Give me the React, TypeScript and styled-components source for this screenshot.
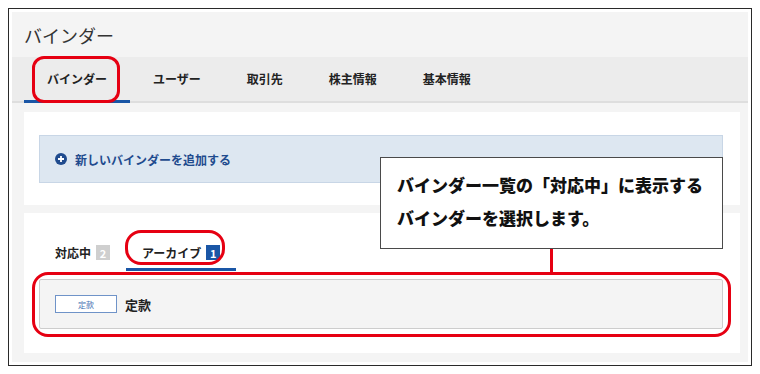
import { FC } from 'react';
import styled, { createGlobalStyle } from 'styled-components';

const GlobalStyle = createGlobalStyle`
	html, body {
		margin: 0;
		padding: 0;
		background: #fff;
	}
	body {
		font-family: "Noto Sans CJK JP", "Noto Sans", sans-serif;
		color: #222;
	}
	* {
		box-sizing: border-box;
	}
`;

const Canvas = styled.div`
	position: relative;
	width: 760px;
	height: 374px;
	padding: 8px 0 0 8px;
`;

const Frame = styled.div`
	width: 744px;
	height: 358px;
	border: 1.5px solid #2a2a2a;
	padding: 3px;
	background: #fff;
`;

const Page = styled.div`
	height: 100%;
	display: flex;
	flex-direction: column;
	background: #f4f4f4;
`;

const Header = styled.div`
	height: 45px;
	display: flex;
	align-items: center;
	padding-left: 12px;
	font-size: 18px;
	color: #333;
`;

const TabBar = styled.div`
	height: 46px;
	display: flex;
	padding-left: 12px;
	background: #ececec;
	border-bottom: 2px solid #dedede;
`;

const NavTab = styled.div<{ $active?: boolean }>`
	display: flex;
	align-items: center;
	padding: 0 23px;
	margin-bottom: -2px;
	font-size: 12px;
	font-weight: 700;
	color: #222;
	border-bottom: 3px solid ${(p) => (p.$active ? '#1a56a6' : 'transparent')};
`;

const Content = styled.div`
	flex: 1;
	display: flex;
	flex-direction: column;
	gap: 8px;
	padding: 9px 8px 9px 12px;
`;

const Card = styled.div<{ $pad: string }>`
	background: #fff;
	padding: ${(p) => p.$pad};
`;

const AddBox = styled.div`
	height: 48px;
	display: flex;
	align-items: center;
	gap: 8px;
	padding-left: 15px;
	background: #dde7f1;
	border: 1px solid #c8d6e6;
	color: #1f4b8e;
	font-size: 12px;
	font-weight: 700;
`;

const SubTabs = styled.div`
	height: 34px;
	display: flex;
	margin-bottom: 8px;
`;

const SubTab = styled.div<{ $active?: boolean }>`
	display: flex;
	align-items: center;
	gap: 5px;
	padding: 0 16px;
	font-size: 12px;
	font-weight: 700;
	color: #222;
	border-bottom: 3px solid ${(p) => (p.$active ? '#1a56a6' : 'transparent')};
`;

const Count = styled.span<{ $active?: boolean }>`
	display: inline-flex;
	align-items: center;
	justify-content: center;
	width: 14px;
	height: 15px;
	font-size: 11px;
	font-weight: 700;
	color: #fff;
	background: ${(p) => (p.$active ? '#1a56a6' : '#cfcfcf')};
`;

const Item = styled.div`
	height: 50px;
	display: flex;
	align-items: center;
	gap: 8px;
	padding-left: 15px;
	background: #f4f4f4;
	border: 1px solid #cdcdcd;
	border-radius: 2px;
`;

const Tag = styled.span`
	width: 62px;
	height: 18px;
	display: flex;
	align-items: center;
	justify-content: center;
	background: #fff;
	border: 1px solid #6f93c8;
	color: #4a74b4;
	font-size: 8px;
`;

const ItemName = styled.span`
	font-size: 13px;
	font-weight: 700;
	color: #222;
`;

const Mark = styled.div<{ $x: number; $y: number; $w: number; $h: number; $r: number }>`
	position: absolute;
	left: ${(p) => p.$x}px;
	top: ${(p) => p.$y}px;
	width: ${(p) => p.$w}px;
	height: ${(p) => p.$h}px;
	border: 3px solid #e60012;
	border-radius: ${(p) => p.$r}px;
	pointer-events: none;
`;

const Callout = styled.div`
	position: absolute;
	left: 380px;
	top: 157px;
	width: 343px;
	height: 92px;
	padding: 10px 0 0 16px;
	background: #fff;
	border: 1.5px solid #4a4a4a;
	font-size: 17px;
	font-weight: 900;
	line-height: 33px;
	color: #111;
`;

const Leader = styled.div`
	position: absolute;
	left: 550px;
	top: 249px;
	width: 3px;
	height: 24px;
	background: #e60012;
`;

const PlusIcon: FC = () => (
	<svg width="12" height="12" viewBox="0 0 12 12">
		<circle cx="6" cy="6" r="6" fill="#1f4b8e" />
		<path d="M6 3v6M3 6h6" stroke="#fff" strokeWidth="1.8" />
	</svg>
);

const navTabs = ['バインダー', 'ユーザー', '取引先', '株主情報', '基本情報'];

const App: FC = () => {
	return (
		<Canvas>
			<GlobalStyle />
			<Frame>
				<Page>
					<Header>バインダー</Header>
					<TabBar>
						{navTabs.map((t, i) => (
							<NavTab key={t} $active={i === 0}>
								{t}
							</NavTab>
						))}
					</TabBar>
					<Content>
						<Card $pad="23px 17px 22px 15px">
							<AddBox>
								<PlusIcon />
								新しいバインダーを追加する
							</AddBox>
						</Card>
						<Card $pad="24px 17px 24px 15px">
							<SubTabs>
								<SubTab>
									対応中 <Count>2</Count>
								</SubTab>
								<SubTab $active>
									アーカイブ <Count $active>1</Count>
								</SubTab>
							</SubTabs>
							<Item>
								<Tag>定款</Tag>
								<ItemName>定款</ItemName>
							</Item>
						</Card>
					</Content>
				</Page>
			</Frame>

			<Mark $x={32} $y={56} $w={88} $h={47} $r={12} />
			<Mark $x={125} $y={230} $w={100} $h={35} $r={16} />
			<Mark $x={32} $y={272} $w={699} $h={65} $r={16} />
			<Leader />
			<Callout>
				バインダー一覧の「対応中」に表示する
				<br />
				バインダーを選択します。
			</Callout>
		</Canvas>
	);
};

export default App;
